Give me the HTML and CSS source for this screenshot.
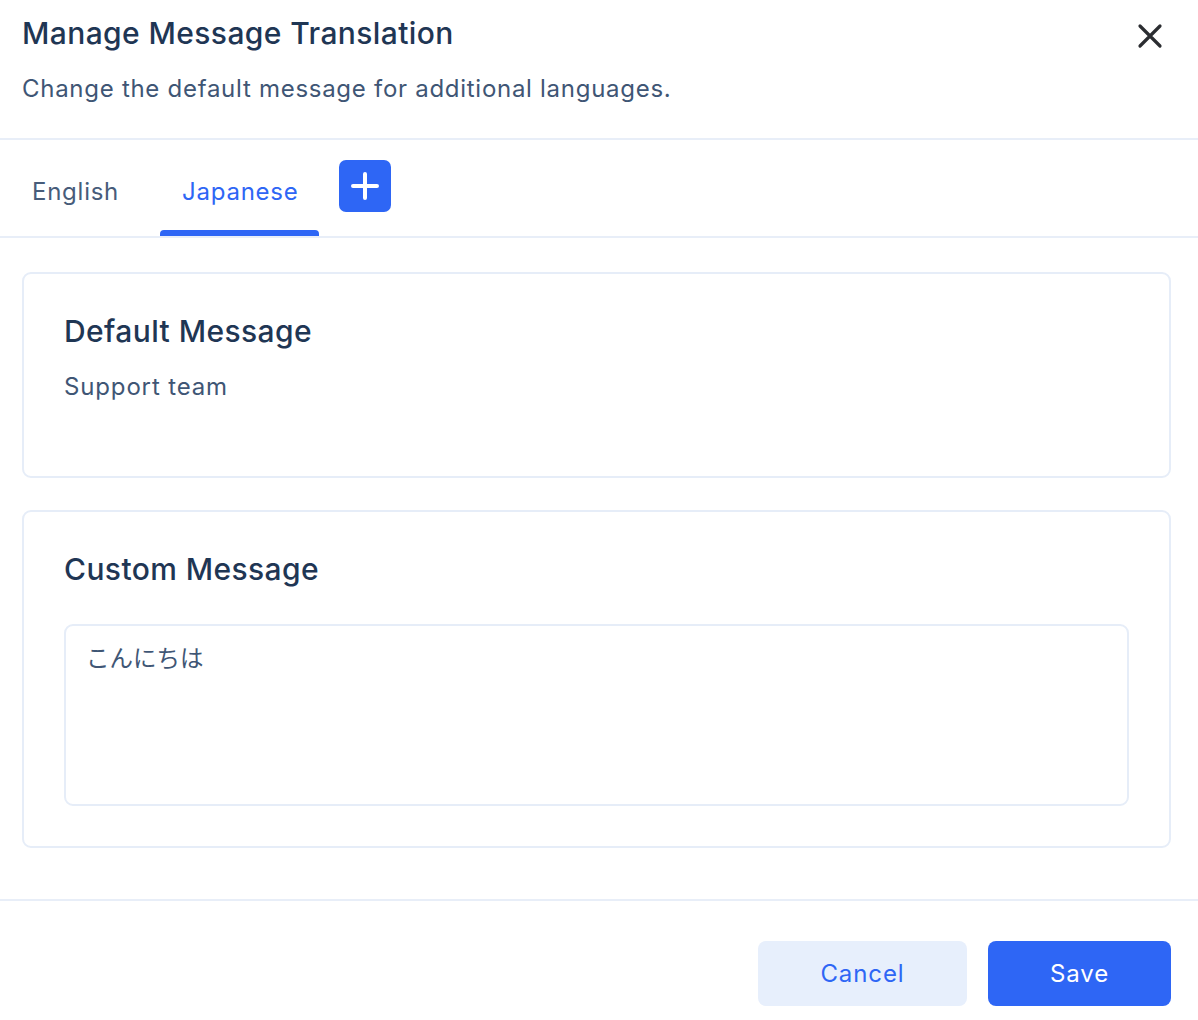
FILE: index.html
```html
<!DOCTYPE html>
<html lang="en">
  <head>
    <meta charset="UTF-8" />
    <meta name="viewport" content="width=device-width, initial-scale=1.0" />
    <title>Manage Message Translation</title>
    <link rel="stylesheet" href="styles.css">
  </head>
  <body>
    <div class="modal">
      <div class="modal-header">
        <div class="header-text">
          <h1>Manage Message Translation</h1>
          <p class="subtitle">Change the default message for additional languages.</p>
        </div>
        <button class="close-button" type="button" aria-label="Close">
          <svg width="26" height="26" viewBox="0 0 26 26">
            <path d="M3 3 L23 23 M23 3 L3 23" stroke="#2b2d31" stroke-width="3.2" stroke-linecap="round" fill="none" />
          </svg>
        </button>
      </div>

      <div class="tabs">
        <div class="tab">English</div>
        <div class="tab active">Japanese</div>
        <button class="add-tab" type="button" aria-label="Add language">
          <svg width="28" height="28" viewBox="0 0 28 28">
            <path d="M14 2 V26 M2 14 H26" stroke="#ffffff" stroke-width="4" stroke-linecap="round" fill="none" />
          </svg>
        </button>
      </div>

      <div class="modal-body">
        <div class="card">
          <h2>Default Message</h2>
          <p class="card-text">Support team</p>
        </div>
        <div class="card card-custom">
          <h2>Custom Message</h2>
          <textarea class="message-input">こんにちは</textarea>
        </div>
      </div>

      <div class="modal-footer">
        <button class="btn btn-cancel" type="button">Cancel</button>
        <button class="btn btn-save" type="button">Save</button>
      </div>
    </div>
  </body>
</html>
```

FILE: styles.css
```css
body {
  font-family: Inter, "Noto Sans", "Noto Sans CJK JP", sans-serif;
  margin: 0;
  padding: 0;
  background: #ffffff;
  color: #1f3654;
}

.modal {
  width: 1198px;
}

.modal-header {
  display: flex;
  justify-content: space-between;
  align-items: flex-start;
  padding: 13px 27px 31px 22px;
  border-bottom: 2px solid #e8eef8;
}

h1 {
  margin: 0;
  font-size: 30px;
  line-height: 40px;
  font-weight: 500;
  letter-spacing: 0.4px;
  color: #1f3654;
}

.subtitle {
  margin: 18px 0 0;
  font-size: 24px;
  line-height: 36px;
  letter-spacing: 0.72px;
  color: #3f5675;
}

.close-button {
  border: none;
  background: none;
  padding: 0;
  margin: 10px 8px 0 0;
  width: 26px;
  height: 26px;
  cursor: pointer;
}

.tabs {
  display: flex;
  align-items: stretch;
  gap: 20px;
  height: 96px;
  padding-left: 10px;
  border-bottom: 2px solid #e8eef8;
}

.tab {
  position: relative;
  display: flex;
  align-items: center;
  padding: 6px 21px 0 22px;
  font-size: 24px;
  letter-spacing: 0.75px;
  color: #475c7a;
  cursor: pointer;
}

.tab.active {
  color: #2e66f5;
}

.tab.active::after {
  content: "";
  position: absolute;
  left: 0;
  right: 0;
  bottom: 0;
  height: 6px;
  background: #2e66f5;
  border-radius: 4px 4px 0 0;
}

.add-tab {
  align-self: flex-start;
  margin-top: 20px;
  width: 52px;
  height: 52px;
  border: none;
  border-radius: 7px;
  background: #2e66f5;
  display: flex;
  align-items: center;
  justify-content: center;
  padding: 0;
  cursor: pointer;
}

.modal-body {
  display: flex;
  flex-direction: column;
  gap: 32px;
  padding: 34px 27px 51px 22px;
  border-bottom: 2px solid #e8eef8;
}

.card {
  border: 2px solid #e6edf8;
  border-radius: 9px;
  padding: 37px 40px 71px;
}

.card-custom {
  padding-bottom: 40px;
}

.card h2 {
  margin: 0;
  font-size: 30px;
  line-height: 40px;
  font-weight: 500;
  letter-spacing: 0.4px;
  color: #1f3654;
}

.card-text {
  margin: 18px 0 0;
  font-size: 24px;
  line-height: 36px;
  letter-spacing: 0.85px;
  color: #3f5675;
}

.message-input {
  display: block;
  width: 100%;
  height: 182px;
  margin-top: 35px;
  padding: 15px 20px;
  box-sizing: border-box;
  border: 2px solid #e6edf8;
  border-radius: 9px;
  font-family: "Noto Sans CJK JP", sans-serif;
  font-size: 23.5px;
  line-height: 32px;
  color: #3f5675;
  resize: none;
  outline: none;
}

.modal-footer {
  display: flex;
  justify-content: flex-end;
  gap: 21px;
  padding: 40px 27px 15px 0;
}

.btn {
  height: 65px;
  border: none;
  border-radius: 8px;
  font-family: Inter, "Noto Sans", sans-serif;
  font-size: 24px;
  letter-spacing: 0.9px;
  cursor: pointer;
}

.btn-cancel {
  width: 209px;
  background: #e7effc;
  color: #2e66f5;
}

.btn-save {
  width: 183px;
  background: #2e66f5;
  color: #ffffff;
}
```
